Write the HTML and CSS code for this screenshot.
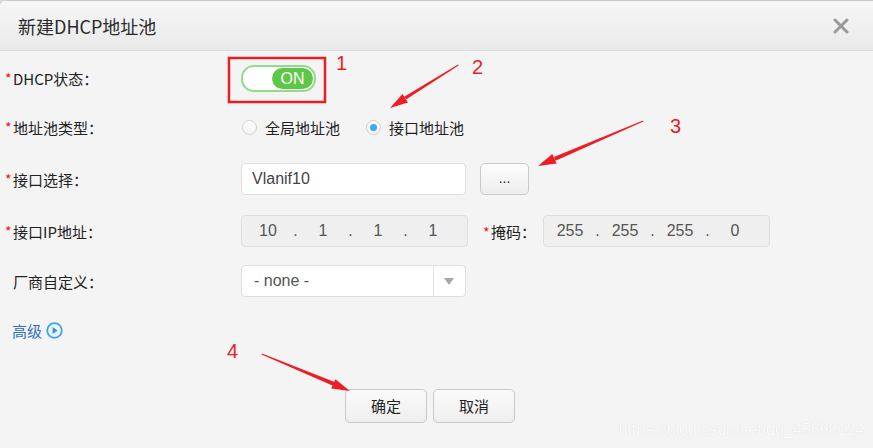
FILE: index.html
```html
<!DOCTYPE html>
<html lang="zh-CN">
<head>
<meta charset="utf-8">
<title>新建DHCP地址池</title>
<link rel="stylesheet" href="styles.css">
</head>
<body>
<div class="dialog">
  <div class="header">
    <span class="title">新建DHCP地址池</span>
    <svg class="close" width="16" height="16" viewBox="0 0 16 16"><path d="M2 2L14 14M14 2L2 14" stroke="#9a9a9a" stroke-width="3" stroke-linecap="round"/></svg>
  </div>
  <div class="form">
    <div class="label"><span class="star">*</span>DHCP状态：</div>
    <div class="field"><div class="toggle"><span class="toggle-on">ON</span></div></div>

    <div class="label"><span class="star">*</span>地址池类型：</div>
    <div class="field">
      <span class="radio"></span><span class="radio-text">全局地址池</span>
      <span class="radio checked"></span><span class="radio-text">接口地址池</span>
    </div>

    <div class="label"><span class="star">*</span>接口选择：</div>
    <div class="field">
      <div class="input">Vlanif10</div>
      <div class="btn-dots">...</div>
    </div>

    <div class="label"><span class="star">*</span>接口IP地址：</div>
    <div class="field">
      <div class="ip"><span class="seg">10</span><span class="dot">.</span><span class="seg">1</span><span class="dot">.</span><span class="seg">1</span><span class="dot">.</span><span class="seg">1</span></div>
      <div class="mask-label"><span class="star">*</span>掩码：</div>
      <div class="ip"><span class="seg">255</span><span class="dot">.</span><span class="seg">255</span><span class="dot">.</span><span class="seg">255</span><span class="dot">.</span><span class="seg">0</span></div>
    </div>

    <div class="label"><span class="star blank"></span>厂商自定义：</div>
    <div class="field">
      <div class="select"><span class="select-text">- none -</span><span class="select-arrow"></span></div>
    </div>

    <div class="advanced">高级
      <svg class="adv-icon" width="17" height="17" viewBox="0 0 17 17"><circle cx="8.5" cy="8.5" r="7.3" fill="#eef6fd" stroke="#3fa2ee" stroke-width="1.8"/><path d="M6.6 4.9L11.6 8.5L6.6 12.1Z" fill="#2f93e6"/></svg>
    </div>
  </div>
  <div class="footer">
    <div class="btn">确定</div>
    <div class="btn">取消</div>
  </div>
  <div class="watermark">https://blog.csdn.net/qq_45668124</div>
  <svg class="annot" width="873" height="448" viewBox="0 0 873 448">
    <rect x="229" y="58" width="96" height="44" fill="none" stroke="#ee1c25" stroke-width="2.5"/>
    <text x="336" y="70" class="num">1</text>
    <text x="472" y="74" class="num">2</text>
    <text x="670" y="133" class="num">3</text>
    <text x="227" y="358" class="num">4</text>
    <polygon points="458,64.6 458.6,65.6 406.4,99.3 404.2,96.8" fill="#ee1c25"/>
    <polygon points="390,108 402.5,94 408,102.6" fill="#ee1c25"/>
    <polygon points="643,120.5 643.4,121.5 555.5,160.8 553.9,157" fill="#ee1c25"/>
    <polygon points="538,166 552.3,154 556.6,163.6" fill="#ee1c25"/>
    <polygon points="262,353.5 261.6,354.5 333,385.8 334.6,382" fill="#ee1c25"/>
    <polygon points="350,391 331.3,388.6 335.4,379.2" fill="#ee1c25"/>
  </svg>
</div>
</body>
</html>
```

FILE: styles.css
```css
html, body {
  margin: 0;
  padding: 0;
  background: #d9d9d9;
}
.dialog {
  position: relative;
  width: 873px;
  height: 448px;
  background: #f4f4f4;
  border-top-left-radius: 7px;
  overflow: hidden;
  font-family: "Noto Sans CJK SC", "Noto Sans", sans-serif;
  color: #222;
}
.header {
  border-top: 1px solid #c9c9c9;
  border-bottom: 1px solid #dcdcdc;
  background: linear-gradient(#f7f7f7, #e9e9e9);
  display: flex;
  align-items: center;
  justify-content: space-between;
  padding: 0 24px 0 18px;
  box-sizing: border-box;
  height: 51px;
}
.title {
  font-size: 18px;
  color: #2a2a2a;
  line-height: 1;
}
.close {
  display: block;
}
.form {
  display: grid;
  grid-template-columns: 241px 1fr;
  grid-template-rows: 48px 50px 54px 50px 50px 48px;
  margin-top: 3px;
}
.label {
  display: flex;
  align-items: center;
  padding-left: 5px;
  font-size: 15px;
  color: #222;
}
.star {
  color: #e5141b;
  width: 8px;
  font-size: 14px;
  display: inline-block;
}
.field {
  display: flex;
  align-items: center;
}
.toggle {
  width: 69px;
  height: 21px;
  border: 2px solid #93db8a;
  border-radius: 13px;
  background: #fff;
  display: flex;
  justify-content: flex-end;
  align-items: center;
  padding: 1px;
}
.toggle-on {
  width: 41px;
  height: 21px;
  border-radius: 11px;
  background: #5ec748;
  color: #fff;
  font-family: "Liberation Sans", Arial, sans-serif;
  font-size: 16px;
  line-height: 21px;
  text-align: center;
}
.radio {
  width: 13px;
  height: 13px;
  border: 1px solid #cfcfcf;
  border-radius: 50%;
  background: linear-gradient(#fff, #f2f2f2);
  margin-left: 1px;
  position: relative;
  flex: none;
}
.radio.checked {
  margin-left: 26px;
}
.radio.checked::after {
  content: "";
  position: absolute;
  left: 3px;
  top: 3px;
  width: 7px;
  height: 7px;
  border-radius: 50%;
  background: #3aaaf2;
}
.radio-text {
  font-size: 15px;
  margin-left: 8px;
  color: #222;
}
.input {
  height: 30px;
  border: 1px solid #dedede;
  border-radius: 4px;
  background: #fff;
  font-family: "Liberation Sans", Arial, sans-serif;
  font-size: 16px;
  color: #444;
  line-height: 30px;
  padding-left: 10px;
  width: 213px;
}
.btn-dots {
  margin-left: 14px;
  width: 47px;
  height: 30px;
  border: 1px solid #c9c9c9;
  border-radius: 5px;
  background: linear-gradient(#fdfdfd, #eeeeee);
  text-align: center;
  font-family: "Liberation Sans", Arial, sans-serif;
  font-size: 14px;
  line-height: 28px;
  color: #222;
}
.ip {
  width: 219px;
  height: 30px;
  border: 1px solid #dedede;
  border-radius: 4px;
  background: #efefef;
  display: flex;
  align-items: center;
  padding-left: 6px;
  font-family: "Liberation Sans", Arial, sans-serif;
  font-size: 16px;
  color: #555;
}
.seg {
  width: 40px;
  text-align: center;
}
.dot {
  width: 15px;
  text-align: center;
}
.mask-label {
  margin-left: 15px;
  width: 60px;
  font-size: 15px;
  color: #222;
}
.select {
  width: 223px;
  height: 30px;
  border: 1px solid #dedede;
  border-radius: 4px;
  background: #fff;
  display: flex;
  align-items: center;
}
.select-text {
  flex: 1;
  padding-left: 12px;
  font-family: "Liberation Sans", Arial, sans-serif;
  font-size: 16px;
  color: #555;
}
.select-arrow {
  width: 31px;
  height: 30px;
  border-left: 1px solid #e2e2e2;
  position: relative;
}
.select-arrow::after {
  content: "";
  position: absolute;
  left: 10px;
  top: 12px;
  border-left: 5.5px solid transparent;
  border-right: 5.5px solid transparent;
  border-top: 7px solid #a8a8a8;
}
.advanced {
  grid-column: 1 / 3;
  display: flex;
  align-items: center;
  padding-left: 12px;
  font-size: 15px;
  color: #2d6fc7;
}
.adv-icon {
  margin-left: 4px;
}
.footer {
  display: flex;
  gap: 6px;
  padding-left: 345px;
  margin-top: 35px;
}
.btn {
  width: 80px;
  height: 32px;
  border: 1px solid #c8c8c8;
  border-radius: 5px;
  background: linear-gradient(#fafafa, #efefef);
  font-size: 15px;
  line-height: 32px;
  text-align: center;
  color: #222;
}
.watermark {
  position: absolute;
  right: 9px;
  bottom: 9px;
  font-family: "Liberation Sans", Arial, sans-serif;
  font-size: 16px;
  color: #fbfbfb;
  text-shadow: 0 0 1px #d6d6d6;
}
.annot {
  position: absolute;
  left: 0;
  top: 0;
  pointer-events: none;
}
.num {
  font-family: "Liberation Sans", Arial, sans-serif;
  font-size: 20px;
  fill: #ee1c25;
}
```
